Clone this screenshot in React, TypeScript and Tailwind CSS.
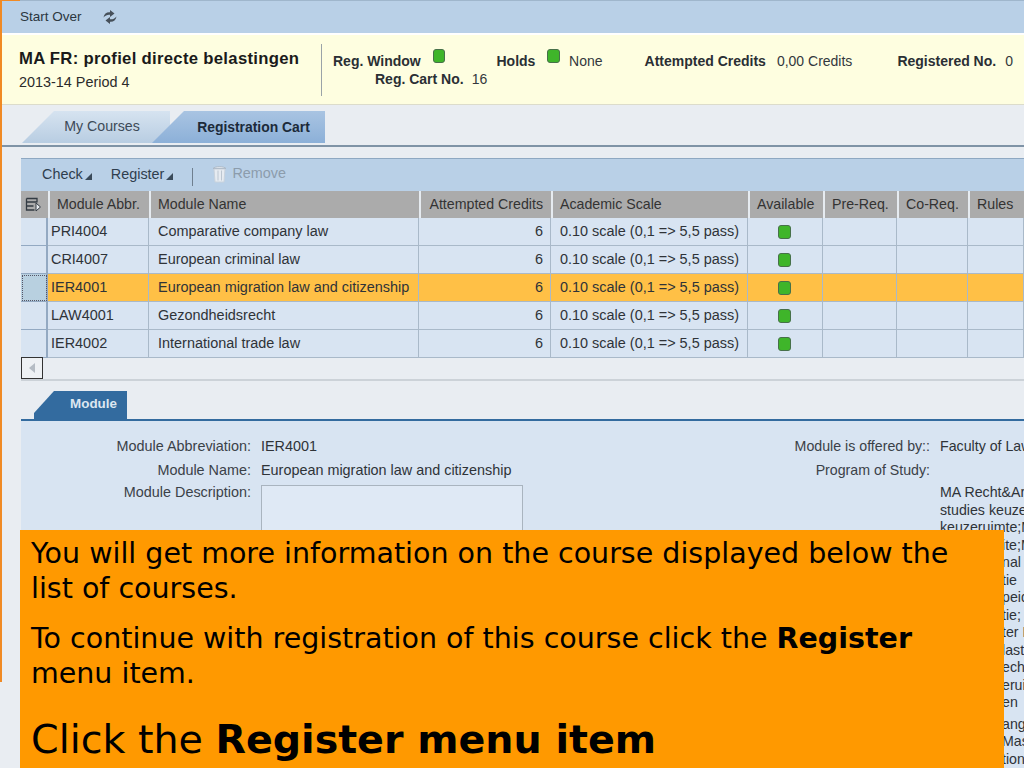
import React from 'react';

const FONT = "font-['Liberation_Sans',Arial,sans-serif]";

const COLS = 'grid grid-cols-[27px_101px_270px_132px_197px_75px_74px_71px_56px]';

const rows = [
  { abbr: 'PRI4004', name: 'Comparative company law' },
  { abbr: 'CRI4007', name: 'European criminal law' },
  { abbr: 'IER4001', name: 'European migration law and citizenship', selected: true },
  { abbr: 'LAW4001', name: 'Gezondheidsrecht' },
  { abbr: 'IER4002', name: 'International trade law' },
];

// only the ends of these lines stick out beside the callout
const studyTails = ['ite;M', 'nal L', 'tie', 'peid', 'tie;', 'ter L', 'last', 'ech', 'erui', 'en'];
const langTails = ['ang', 'Mas', 'tion'];

const Led = ({ className = '' }: { className?: string }) => (
  <span className={`inline-block w-[13px] h-[14px] rounded-[3px] bg-[#3fb52a] border border-[#47704a] ${className}`} />
);

const RefreshIcon = () => (
  <svg width="16" height="16" viewBox="0 0 16 16" fill="#46505a">
    <path d="M1.500 8.500C2 4.500 5 2.800 8 3.200V1l4.500 3.500L8 8V5.700C5.800 5.400 3.500 6 1.500 8.500z" />
    <path d="M14.500 7.500C14 11.500 11 13.200 8 12.800V15l-4.500-3.500L8 8v2.300c2.200.3 4.500-.3 6.500-2.800z" />
  </svg>
);

const TrashIcon = () => (
  <svg width="15" height="18" viewBox="0 0 15 18" fill="none">
    <path d="M2 4h11l-1 13H3z" fill="#e6ebf1" stroke="#c9d2dc" />
    <path d="M1 3.500C3 1 12 1 14 3.500z" fill="#dfe5ec" stroke="#aab5c1" strokeWidth="0.800" />
    <path d="M6 5.500v10M9.500 5.500v10" stroke="#bcc6d1" />
  </svg>
);

const Caret = () => (
  <span className="inline-block ml-[2px] mt-[3px] w-0 h-0 border-l-[7px] border-l-transparent border-b-[7px] border-b-[#3a4a5a]" />
);

const HeaderCell = ({ children, align = 'left' }: { children: React.ReactNode; align?: 'left' | 'right' }) => (
  <div className={`flex items-center h-[27px] pt-px border-l-2 border-[#e6ebf0] px-[7px] text-[#333] text-[14.200px] whitespace-nowrap ${align === 'right' ? 'justify-end !pr-[8px]' : ''}`}>
    {children}
  </div>
);

const Cell = ({ children, selected, align = 'left', className = '' }: { children?: React.ReactNode; selected?: boolean; align?: 'left' | 'right' | 'center'; className?: string }) => (
  <div
    className={`flex items-center h-[28px] border-r border-b border-[#a9b9c9] px-[9px] text-[14.450px] text-[#2f3338] whitespace-nowrap ${selected ? 'bg-[#ffc046]' : 'bg-[#d8e4f2]'} ${align === 'right' ? 'justify-end !pr-[7px]' : ''} ${align === 'center' ? 'justify-center' : ''} ${className}`}
  >
    {children}
  </div>
);

const FormRow = ({ label, children, className = '' }: { label: string; children?: React.ReactNode; className?: string }) => (
  <div className={`flex items-start leading-[16px] ${className}`}>
    <div className="w-[230px] shrink-0 text-right text-[14.400px] text-[#3b4148] whitespace-nowrap">{label}</div>
    <div className="ml-[10px] text-[14.400px] text-[#2f3338] whitespace-nowrap">{children}</div>
  </div>
);

export default function App() {
  return (
    <div className={`relative w-[1024px] h-[768px] overflow-hidden bg-[#e9edf2] ${FONT}`}>
      {/* slide edge */}
      <div className="absolute left-0 top-0 w-[2px] h-[682px] bg-[#f08a24]" />
      <div className="absolute left-0 top-0 w-[20px] h-px bg-[#f08a24]" />

      <div className="pl-[2px]">
        <div className="h-[33px] flex items-center pl-[18px] bg-[#b9d0e7] border-t border-[#9fb6cc] text-[13.500px] text-[#2b3640]">
          <span>Start Over</span>
          <span className="ml-[20px] flex"><RefreshIcon /></span>
        </div>

        <div className="h-[72px] flex items-center bg-[#fefee0] border-t-2 border-white border-b border-b-[#dcdccb] pl-[17px]">
          <div className="w-[302px] shrink-0 mt-[3px]">
            <div className="text-[16.700px] font-bold text-[#1a1a1a] tracking-[0.3px] leading-[20px] whitespace-nowrap">MA FR: profiel directe belastingen</div>
            <div className="text-[14.400px] text-[#2b2b2b] mt-[3px]">2013-14 Period 4</div>
          </div>
          <div className="w-px h-[52px] bg-[#9aa3a8]" />
          <div className="ml-[11px] mt-[8px] text-[14px] text-[#33383d] h-[44px] w-[680px]">
            <div className="flex items-center h-[19px] whitespace-nowrap">
              <b className="text-[#2a2f34]">Reg. Window</b>
              <Led className="ml-[12px] -mt-[10px]" />
              <b className="ml-[51px] text-[#2a2f34]">Holds</b>
              <Led className="ml-[12px] -mt-[10px]" />
              <span className="ml-[9px]">None</span>
              <b className="ml-[42px] text-[#2a2f34]">Attempted Credits</b>
              <span className="ml-[11px]">0,00 Credits</span>
              <b className="ml-[45px] text-[#2a2f34]">Registered No.</b>
              <span className="ml-[9px]">0</span>
            </div>
            <div className="flex items-center h-[18px] pl-[42px] whitespace-nowrap">
              <b className="text-[#2a2f34]">Reg. Cart No.</b>
              <span className="ml-[8px]">16</span>
            </div>
          </div>
        </div>

        <div className="h-[42px] flex items-end pl-[20px] border-b-2 border-[#7f93a6] pb-[2px]">
          <div className="w-[148px] h-[32px] flex items-center justify-center pl-[12px] text-[14.200px] text-[#3d4a58] bg-[linear-gradient(180deg,#d6e3f0,#b8cde2)] [clip-path:polygon(32px_0,100%_0,100%_100%,0_100%)]">
            My Courses
          </div>
          <div className="-ml-[18px] w-[173px] h-[32px] flex items-center justify-center pl-[30px] text-[13.900px] font-bold text-[#1c2a3a] bg-[linear-gradient(180deg,#a9c4e2,#8cb0d8)] [clip-path:polygon(32px_0,100%_0,100%_100%,0_100%)]">
            Registration Cart
          </div>
        </div>

        <div className="ml-[19px] mt-[11px]">
          <div className="h-[33px] flex items-center pl-[21px] bg-[#b9d0e7] border-t border-[#8ea8c2] text-[14.400px] text-[#2f3e4e] whitespace-nowrap">
            <span>Check</span><Caret />
            <span className="ml-[19px]">Register</span><Caret />
            <span className="ml-[19px] w-px h-[18px] mt-[4px] bg-[#6f7f8f]" />
            <span className="ml-[19px] -mt-[2px] flex"><TrashIcon /></span>
            <span className="ml-[5px] text-[#8c9cac] -mt-[2px]">Remove</span>
          </div>

          <div className={`${COLS} bg-[#ababab]`}>
            <div className="flex items-center h-[27px] pl-[4px]">
              <svg width="17" height="15" viewBox="0 0 17 15" fill="none" stroke="#333b43" strokeWidth="1.300">
                <path d="M1.500 1.500h10.500v4M1.500 1.500v11.500h8M1.500 5h10M1.500 9h7" />
                <path d="M11 6l4.500 4-4.500 4z" fill="#e8ecf0" strokeWidth="1" />
              </svg>
            </div>
            <HeaderCell>Module Abbr.</HeaderCell>
            <HeaderCell>Module Name</HeaderCell>
            <HeaderCell align="right">Attempted Credits</HeaderCell>
            <HeaderCell>Academic Scale</HeaderCell>
            <HeaderCell>Available</HeaderCell>
            <HeaderCell>Pre-Req.</HeaderCell>
            <HeaderCell>Co-Req.</HeaderCell>
            <HeaderCell>Rules</HeaderCell>
          </div>

          {rows.map((row) => (
            <div key={row.abbr} className={COLS}>
              <div className={`h-[28px] border-r-2 border-r-[#93a9c2] border-b border-b-[#93a9c2] ${row.selected ? 'bg-[#b8d0e0] outline-1 outline-dotted -outline-offset-2 outline-[#556]' : 'bg-[#d8e4f2]'}`} />
              <Cell selected={row.selected} className="!px-[3px]">{row.abbr}</Cell>
              <Cell selected={row.selected}>{row.name}</Cell>
              <Cell selected={row.selected} align="right">6</Cell>
              <Cell selected={row.selected}>0.10 scale (0,1 =&gt; 5,5 pass)</Cell>
              <Cell selected={row.selected} align="center"><Led className="-ml-[1px]" /></Cell>
              <Cell selected={row.selected} />
              <Cell selected={row.selected} />
              <Cell selected={row.selected} />
            </div>
          ))}

          <div className="h-[24px] flex items-start border-b-2 border-[#ccd2d8] -mt-px">
            <div className="w-[22px] h-[22px] bg-[#eef1f4] border border-[#333] flex items-center justify-center">
              <span className="w-0 h-0 border-y-[5px] border-y-transparent border-r-[6px] border-r-[#b5bcc4]" />
            </div>
          </div>

          <div className="h-[40px] flex items-end border-b-2 border-[#336b9f]">
            <div className="ml-[13px] w-[93px] h-[28px] flex items-center justify-center pl-[26px] pb-[2px] text-[13.400px] font-bold text-[#dce6f0] bg-[#336b9f] [clip-path:polygon(20px_0,100%_0,100%_100%,0_100%,0_22px)]">
              Module
            </div>
          </div>

          <div className="h-[350px] bg-[#d8e4f2] pt-[17px] flex">
            <div className="w-[500px] shrink-0">
              <FormRow label="Module Abbreviation:">IER4001</FormRow>
              <FormRow label="Module Name:" className="mt-[8px]">European migration law and citizenship</FormRow>
              <FormRow label="Module Description:" className="mt-[6px]">
                <div className="w-[262px] h-[100px] mt-px border border-[#a9b4bf] bg-[#dfe9f5]" />
              </FormRow>
            </div>
            <div className="flex-1 min-w-0 text-[14.200px] leading-[16px] whitespace-nowrap">
              <div className="flex items-start">
                <div className="w-[409px] shrink-0 text-right text-[#3b4148]">Module is offered by::</div>
                <div className="ml-[10px] text-[#2f3338]">Faculty of Law</div>
              </div>
              <div className="flex items-start mt-[8px]">
                <div className="w-[409px] shrink-0 text-right text-[#3b4148]">Program of Study:</div>
              </div>
              <div className="ml-[419px] mt-[6px] leading-[17.500px] text-[#2f3338]">
                <div>MA Recht&amp;Arbeid</div>
                <div>studies keuzeruimte</div>
                <div>keuzeruimte;MA</div>
                <div className="pl-[62px]">
                  {studyTails.map((tail) => <div key={tail}>{tail}</div>)}
                </div>
                <div className="pl-[62px] mt-[4px]">
                  {langTails.map((tail) => <div key={tail}>{tail}</div>)}
                </div>
              </div>
            </div>
          </div>
        </div>
      </div>

      {/* slide callout over the screen */}
      <div className="absolute left-[20px] top-[530px] w-[984px] h-[238px] bg-[#ff9900] pl-[11px] pr-[40px] pt-[6px] font-['DejaVu_Sans',Verdana,sans-serif] text-black">
        <p className="text-[28.500px] leading-[35px]">You will get more information on the course displayed below the list of courses.</p>
        <p className="text-[28.500px] leading-[35px] mt-[15px]">To continue with registration of this course click the <b>Register</b> menu item.</p>
        <p className="text-[39.600px] leading-[46px] mt-[25px] whitespace-nowrap">Click the <b>Register menu item</b></p>
      </div>
    </div>
  );
}
